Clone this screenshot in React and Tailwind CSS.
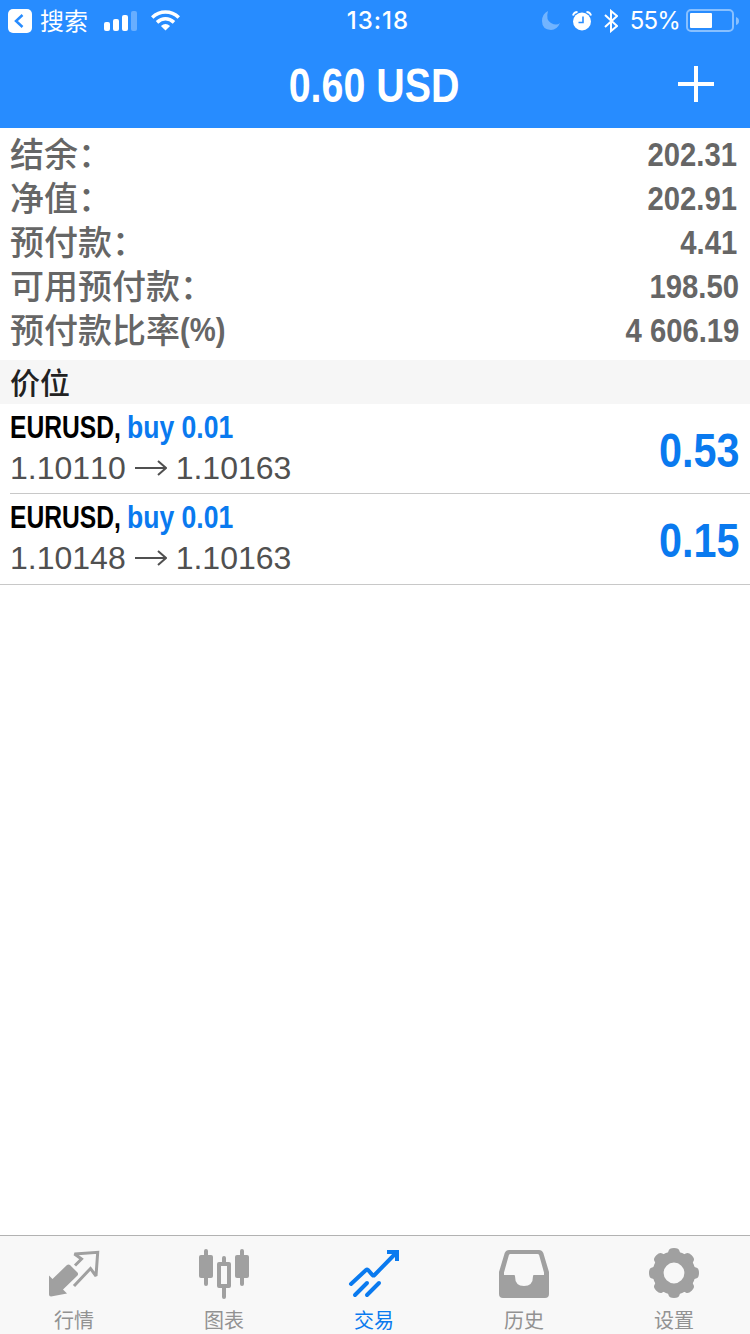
import React from 'react';
import { clsx } from 'clsx';

const account = [
  { label: '结余', colon: true, value: '202.31', inset: 'pr-[13px]' },
  { label: '净值', colon: true, value: '202.91', inset: 'pr-[13px]' },
  { label: '预付款', colon: true, value: '4.41', inset: 'pr-[13px]' },
  { label: '可用预付款', colon: true, value: '198.50', inset: 'pr-[11px]' },
  { label: '预付款比率', suffix: '(%)', value: '4 606.19', inset: 'pr-[11px]' },
];

const positions = [
  { id: 1, symbol: 'EURUSD,', side: 'buy 0.01', open: '1.10110', current: '1.10163', profit: '0.53' },
  { id: 2, symbol: 'EURUSD,', side: 'buy 0.01', open: '1.10148', current: '1.10163', profit: '0.15' },
];

function QuotesIcon() {
  return (
    <svg width="52" height="50" viewBox="0 0 52 50" fill="none">
      <path d="M1 26.500l3.500 3.500L19 16q1.500-1.200 3 0l7.500 7.500q1.200 1.500 0 3L15 40.500l4 4L3 47.500q-2 0-2-2z" fill="currentColor" />
      <path d="M26 37L42.500 19.500l5.500 7.500L49.700 3.300 26.500 5l7 5-6.500 6.500" stroke="currentColor" strokeWidth="3" strokeMiterlimit="2" />
    </svg>
  );
}

function ChartIcon() {
  return (
    <svg width="52" height="50" viewBox="0 0 52 50" fill="none" stroke="currentColor">
      <path d="M8 2v33M44 2v33M26 9v5M26 39v9" strokeWidth="4" strokeLinecap="round" />
      <rect x="1" y="6" width="14" height="23" rx="2" fill="currentColor" stroke="none" />
      <rect x="37" y="6" width="14" height="23" rx="2" fill="currentColor" stroke="none" />
      <rect x="21" y="15" width="10" height="22" strokeWidth="4" strokeLinejoin="round" />
    </svg>
  );
}

function TradeIcon() {
  return (
    <svg width="52" height="50" viewBox="0 0 52 50" fill="none" stroke="currentColor" strokeWidth="4" strokeLinecap="round">
      <path d="M3 35l15-14q1-.8 2 0l4.500 5q1 1 2 0L48 4" />
      <path d="M39 3h10v9" strokeLinecap="butt" />
      <path d="M7 46l12-12M19 46l12-12" />
    </svg>
  );
}

function HistoryIcon() {
  return (
    <svg width="52" height="50" viewBox="0 0 52 50">
      <path
        fill="currentColor"
        fillRule="evenodd"
        d="M11 1h30q3 0 4.300 3L51 23v22q0 4-4 4H5q-4 0-4-4V23L6.700 4Q8 1 11 1zM12.500 5q-1.200 0-1.600 1L6 23.500V26h10q1 0 1 1.200Q17 37 26 37t9-9.800Q35 26 36 26h10v-2.500L41.100 6q-.4-1-1.600-1z"
      />
    </svg>
  );
}

function SettingsIcon() {
  return (
    <svg width="52" height="52" viewBox="0 0 52 52">
      <circle cx="26" cy="26" r="15.900" fill="none" stroke="currentColor" strokeWidth="11" />
      {[0, 45, 90, 135, 180, 225, 270, 315].map((angle) => (
        <path
          key={angle}
          d="M15.500 8q4.500-.5 5-4Q21 1 26 1t5.500 3q.5 3.500 5 4z"
          fill="currentColor"
          transform={`rotate(${angle} 26 26)`}
        />
      ))}
    </svg>
  );
}

const tabs = [
  { label: '行情', icon: QuotesIcon },
  { label: '图表', icon: ChartIcon },
  { label: '交易', icon: TradeIcon, active: true },
  { label: '历史', icon: HistoryIcon },
  { label: '设置', icon: SettingsIcon, tall: true },
];

function StatusBar() {
  return (
    <div className="flex h-[41px] items-center justify-between">
      <div className="flex w-[300px] items-center pl-2">
        <svg width="24" height="24" viewBox="0 0 24 24">
          <rect width="24" height="24" rx="5" fill="white" />
          <path d="M14.500 6l-6.500 6 6.500 6" fill="none" stroke="#278cff" strokeWidth="2.500" />
        </svg>
        <span className="ml-2 pt-0.5 text-2xl">搜索</span>
        <svg className="ml-4" width="33" height="20" viewBox="0 0 33 20" fill="white">
          <rect x="0" y="11" width="6" height="9" rx="2" />
          <rect x="9" y="8" width="6" height="12" rx="2" />
          <rect x="18" y="4" width="6" height="16" rx="2" />
          <rect x="27" y="0" width="6" height="20" rx="2" opacity=".3" />
        </svg>
        <svg className="ml-3.5" width="29" height="21" viewBox="0 0 29 21" fill="none" stroke="white" strokeWidth="3.600">
          <path d="M1.200 7.500Q7 2 14.500 2t13.300 5.500" />
          <path d="M6 12.300q4-3.600 8.500-3.600t8.500 3.600" />
          <path d="M14.500 20.500l-4.600-4.600q4.600-3.600 9.200 0z" fill="white" stroke="none" />
        </svg>
      </div>
      <span className="pt-px pl-[6px] font-[Inter] text-2xl font-medium tracking-[1px]">13:18</span>
      <div className="flex w-[300px] items-center justify-end pr-[18px]">
        <svg width="18" height="19" viewBox="0 0 18 19">
          <path d="M6 0Q3.500 9 9 12t9 0q-3 7-9 7Q0 18.500 0 10 0 3 6 0z" fill="white" opacity=".35" />
        </svg>
        <svg className="ml-3" width="20" height="20" viewBox="0 0 20 20" fill="white">
          <circle cx="10" cy="10.500" r="9" />
          <path d="M1 4.500Q2 1 5.500 1M14.500 1Q18 1 19 4.500" fill="none" stroke="white" strokeWidth="2" />
          <path d="M11 5.500v6H6.500" fill="none" stroke="#278cff" strokeWidth="1.600" />
        </svg>
        <svg className="ml-3" width="14" height="24" viewBox="0 0 14 24" fill="none" stroke="white" strokeWidth="2">
          <path d="M1 6l12 11-6 5V2l6 5L1 18" />
        </svg>
        <span className="ml-3 pt-px font-[Inter] text-2xl tracking-[-0.8px]">55%</span>
        <svg className="-mr-2 ml-1.5" width="54" height="24" viewBox="0 0 54 24">
          <rect x="1" y="1" width="46" height="21" rx="4" fill="none" stroke="white" strokeOpacity=".45" strokeWidth="2" />
          <rect x="4" y="4" width="22" height="15" rx="1" fill="white" />
          <path d="M50 8q3 1 3 4t-3 4z" fill="white" opacity=".45" />
        </svg>
      </div>
    </div>
  );
}

function Header() {
  return (
    <header className="h-32 shrink-0 bg-[#278cff] text-white">
      <StatusBar />
      <div className="grid h-[85px] grid-cols-[96px_1fr_96px] items-center">
        <h1 className="col-start-2 h-[85px] pt-0.5 pr-0.5 text-center">
          <span className="inline-block scale-x-[0.82] text-[48px] leading-[85px] font-bold whitespace-nowrap">0.60 USD</span>
        </h1>
        <button type="button" className="justify-self-end pr-9">
          <svg width="36" height="36" viewBox="0 0 36 36" stroke="white" strokeWidth="4">
            <path d="M18 0v36M0 18h36" />
          </svg>
        </button>
      </div>
    </header>
  );
}

function AccountRow({ label, colon, suffix, value, inset }) {
  return (
    <div className={clsx('flex h-11 items-center justify-between pl-2.5 text-[34px] leading-[44px] text-[#666]', inset)}>
      <div className="flex font-medium">
        <span className="pt-0.5">{label}</span>
        {colon && <span className="pt-0.5">：</span>}
        {suffix && <span className="inline-block origin-left scale-x-[0.86] font-bold">{suffix}</span>}
      </div>
      <span className="inline-block origin-right scale-x-[0.86] font-bold">{value}</span>
    </div>
  );
}

function PositionRow({ symbol, side, open, current, profit }) {
  return (
    <div className="flex h-[90px] items-start justify-between pr-[11px]">
      <div className="flex flex-col">
        <div className="flex h-11 text-[32px] leading-[46px] font-bold">
          <div className="w-[117px]">
            <span className="inline-block origin-left scale-x-[0.77] text-black">{symbol}</span>
          </div>
          <span className="inline-block origin-left scale-x-[0.83] text-[#0a7aef]">{side}</span>
        </div>
        <div className="flex h-10 items-center text-[32px] leading-10 text-[#505050] [font-kerning:none]">
          <span>{open}</span>
          <svg className="mr-[9px] ml-[9px]" width="32" height="18" viewBox="0 0 32 18" fill="none" stroke="currentColor" strokeWidth="2">
            <path d="M0 9h30M23 2l8 7-8 7" />
          </svg>
          <span>{current}</span>
        </div>
      </div>
      <span className="inline-block origin-right scale-x-[0.86] text-[48px] leading-[93px] font-bold text-[#0a7aef]">{profit}</span>
    </div>
  );
}

function TabBar() {
  return (
    <nav className="grid h-[99px] shrink-0 grid-cols-5 border-t border-[#b2b2b2] bg-[#f8f8f8]">
      {tabs.map(({ label, icon: Icon, active, tall }) => (
        <button
          key={label}
          type="button"
          className={clsx('flex flex-col items-center pt-[11px] pr-0.5', active ? 'text-[#0a7aef]' : 'text-[#a0a0a0]')}
        >
          <div className={clsx('flex h-[54px] items-start', !tall && 'pt-0.5')}>
            <Icon />
          </div>
          <span className={clsx('mt-1.5 text-[20px] leading-[28px]', !active && 'text-[#929292]')}>{label}</span>
        </button>
      ))}
    </nav>
  );
}

export default function App() {
  return (
    <div className="flex h-[1334px] w-[750px] flex-col overflow-hidden bg-white font-['Liberation_Sans','Noto_Sans_CJK_SC',sans-serif]">
      <Header />

      <section className="h-[232px] shrink-0 pt-1">
        {account.map((row) => (
          <AccountRow key={row.label} {...row} />
        ))}
      </section>

      <h2 className="h-11 shrink-0 bg-[#f6f6f6] pt-px pl-2.5 text-[30px] leading-[45px] font-medium text-[#222]">价位</h2>

      <main className="flex-1">
        <div className="divide-y divide-[#c8c8c8] border-b border-[#c8c8c8] pl-2.5">
          {positions.map((position) => (
            <PositionRow key={position.id} {...position} />
          ))}
        </div>
      </main>

      <TabBar />
    </div>
  );
}
